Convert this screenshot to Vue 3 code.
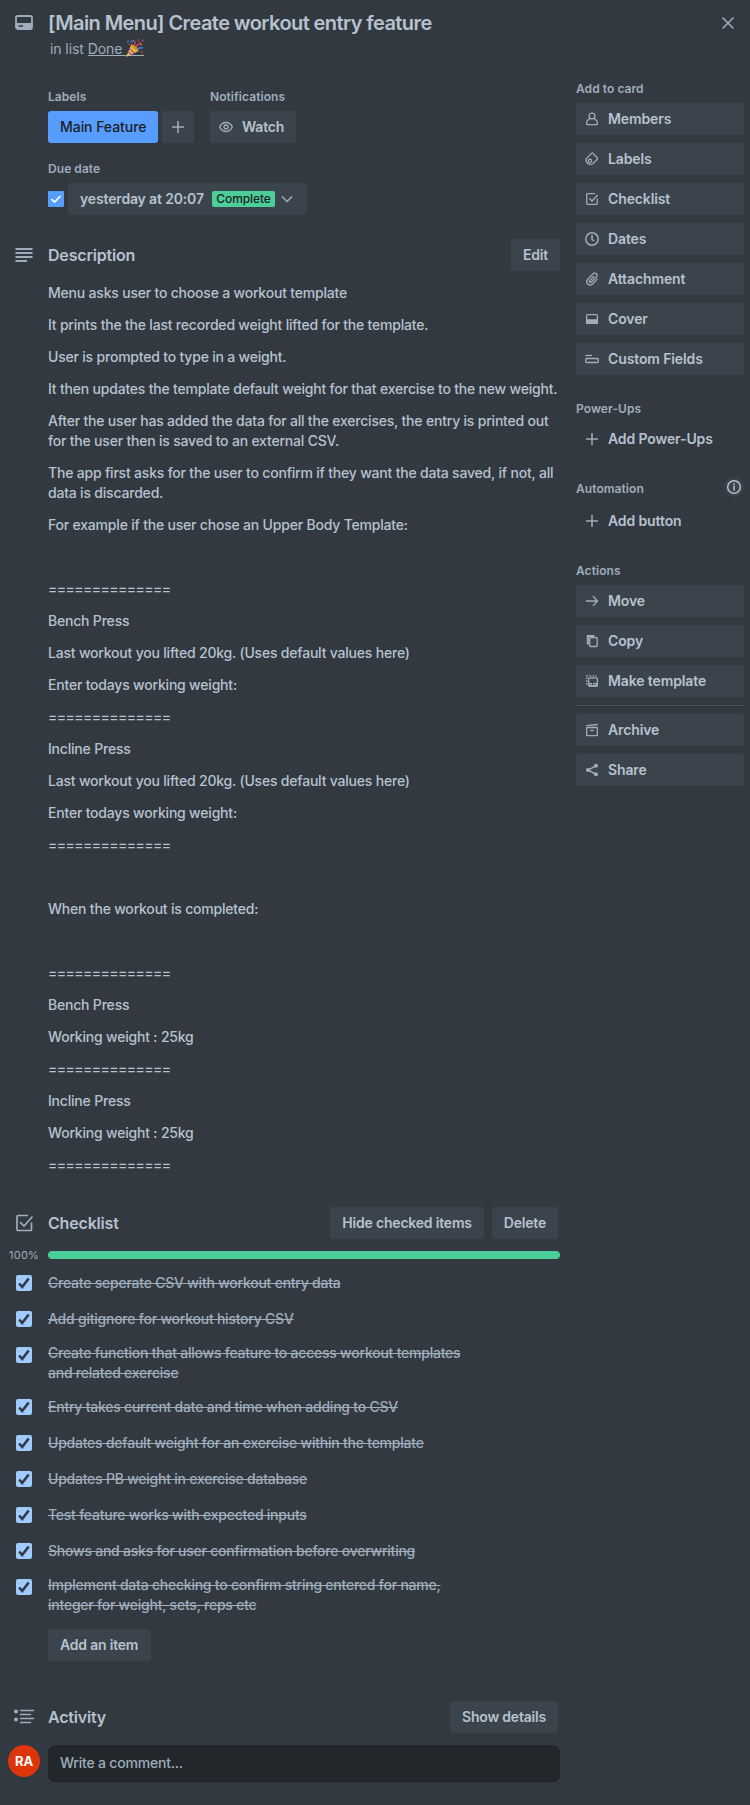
<script setup>
const rule = '=============='
const description = [
  'Menu asks user to choose a workout template',
  'It prints the the last recorded weight lifted for the template.',
  'User is prompted to type in a weight.',
  'It then updates the template default weight for that exercise to the new weight.',
  'After the user has added the data for all the exercises, the entry is printed out\nfor the user then is saved to an external CSV.',
  'The app first asks for the user to confirm if they want the data saved, if not, all\ndata is discarded.',
  'For example if the user chose an Upper Body Template:',
  '',
  rule,
  'Bench Press',
  'Last workout you lifted 20kg. (Uses default values here)',
  'Enter todays working weight:',
  rule,
  'Incline Press',
  'Last workout you lifted 20kg. (Uses default values here)',
  'Enter todays working weight:',
  rule,
  '',
  'When the workout is completed:',
  '',
  rule,
  'Bench Press',
  'Working weight : 25kg',
  rule,
  'Incline Press',
  'Working weight : 25kg',
  rule,
]
const items = [
  'Create seperate CSV with workout entry data',
  'Add gitignore for workout history CSV',
  'Create function that allows feature to access workout templates\nand related exercise',
  'Entry takes current date and time when adding to CSV',
  'Updates default weight for an exercise within the template',
  'Updates PB weight in exercise database',
  'Test feature works with expected inputs',
  'Shows and asks for user confirmation before overwriting',
  'Implement data checking to confirm string entered for name,\ninteger for weight, sets, reps etc',
]
const plus = '<path d="M8 2v12M2 8h12"/>'
const addToCard = [
  { label: 'Members', icon: '<circle cx="8" cy="5" r="2.900"/><path d="M5.900 7.600C3.600 8.600 2.600 10.300 2.600 12.700c0 .6.3.9.9.9h9c.6 0 .9-.3.9-.9 0-2.400-1-4.100-3.300-5.100"/>' },
  { label: 'Labels', icon: '<path d="M7.600 2.400Q8.300 1.700 9 2.400L13.400 7Q13.900 7.700 13.300 8.300L8.800 12.800A4.600 4.600 0 0 1 2.100 7.900Z" stroke-linejoin="round"/><circle cx="6" cy="9.700" r="1.600"/>' },
  { label: 'Checklist', icon: '<path d="M11 2.700H3.500a.8.8 0 0 0-.8.8v9a.8.8 0 0 0 .8.8h9a.8.8 0 0 0 .8-.8V7.500M5.300 7.300 8 10l5.700-6"/>' },
  { label: 'Dates', icon: '<circle cx="8" cy="8" r="6.200" stroke-width="1.500"/><path d="M8 4v4.300l2 1.700" stroke-width="1.500"/>' },
  { label: 'Attachment', icon: '<path d="m13.600 7.600-4.800 5.100c-1.500 1.500-3.700 1.700-5.100.4s-1.300-3.400.1-4.900l5.100-5.300c1-1 2.500-1.100 3.400-.2s.9 2.400-.1 3.400l-4.800 4.900c-.6.6-1.300.6-1.700.2s-.4-1.100.2-1.700L10.200 5"/>' },
  { label: 'Cover', icon: '<rect x="2.600" y="3.600" width="10.800" height="8.800" rx="1"/><path d="M2.600 9h10.800v3.400H2.600z" fill="currentColor"/>' },
  { label: 'Custom Fields', icon: '<path d="M1.500 4.500H8"/><rect x="1.700" y="7.500" width="12.600" height="4" rx="1"/>' },
]
const actions = [
  { label: 'Move', icon: '<path d="M2 8h11.500M9 3.300 13.500 8 9 12.700"/>' },
  { label: 'Copy', icon: '<path d="M3.800 11.500V3h6.700" stroke-width="2"/><rect x="5.700" y="4.700" width="7.500" height="8.800" rx=".8"/>' },
  { label: 'Make template', icon: '<path d="M2.700 12V2.800h10" stroke-dasharray="1.800 1.200"/><rect x="4.700" y="4.800" width="8.700" height="8.400" rx="1"/><path d="M5 10.800h3M9 10.800h4v2H5" stroke-width="1.500"/>' },
]
const moreActions = [
  { label: 'Archive', icon: '<path d="M2.300 3.600 13.800 2.500"/><rect x="2.700" y="5.500" width="10.600" height="8.200" rx=".6"/><path d="M6 8.500h4"/>' },
  { label: 'Share', icon: '<path d="M12 3.800 4 8l8 4.300" stroke-width="1.500"/><g fill="currentColor" stroke="none"><circle cx="12" cy="3.800" r="2"/><circle cx="4" cy="8" r="2"/><circle cx="12" cy="12.300" r="2"/></g>' },
]
</script>

<template>
  <div class="card">
    <header class="card-header">
      <svg class="header-icon" width="20" height="18" viewBox="0 0 20 18" fill="none" stroke="currentColor" stroke-width="1.800">
        <rect x="2" y="3" width="16" height="13" rx="1.800" />
        <path d="M2 10h16v5H2zM4.500 12.200v1.600H9v-1.600z" fill="currentColor" fill-rule="evenodd" stroke="none" />
      </svg>
      <div class="heading">
        <h1>[Main Menu] Create workout entry feature</h1>
        <p>in list <span class="list-link">Done <svg class="popper" width="18" height="18" viewBox="0 0 18 18" fill="none">
          <path d="M0 18 5.500 5.500 12.500 12Z" fill="#f8c13d" />
          <path d="m3.600 9.600 5 4.600M2.300 13l3.300 2.800" stroke="#9a5ca8" stroke-width="1.500" />
          <ellipse cx="9" cy="9" rx="1.700" ry="4.700" transform="rotate(-46 9 9)" fill="#d99520" />
          <path d="M8 7c2-1.500 0-3.500 1-5M10 8c1-3 4-2 4.500-5" stroke="#e5435a" stroke-width="1.300" />
          <path d="M11 10c2-2 4 0 6-1.500" stroke="#3b88dc" stroke-width="1.500" />
          <path d="M1 2.500h2M5 1l1.500 3" stroke="#347ac8" stroke-width="1.500" />
          <path d="M16 1.500h1.500M12 1.500l1-1M15 13h1.500M3 5l1 1" stroke="#e24660" stroke-width="1.500" />
          <path d="m14 6 2-1M7 1.500h1M16 16h1" stroke="#d08432" stroke-width="1.300" />
        </svg></span></p>
      </div>
      <svg class="close" width="16" height="16" viewBox="0 0 16 16" fill="none" stroke="currentColor" stroke-width="1.500"><path d="m2.500 2.500 11 11m0-11-11 11" /></svg>
    </header>

    <div class="columns">
      <main>
        <div class="meta">
          <section>
            <h3>Labels</h3>
            <div class="label-row">
              <span class="label-chip">Main Feature</span>
              <button class="btn square"><svg width="16" height="16" viewBox="0 0 16 16" fill="none" stroke="currentColor" stroke-width="1.500" v-html="plus"></svg></button>
            </div>
          </section>
          <section>
            <h3>Notifications</h3>
            <button class="btn watch">
              <svg width="16" height="16" viewBox="0 0 16 16" fill="none" stroke="currentColor" stroke-width="1.300"><path d="M1.700 8C3 5 5.100 3.500 8 3.500S13 5 14.300 8C13 11 10.900 12.500 8 12.500S3 11 1.700 8Z" /><circle cx="8" cy="8" r="2" /></svg>
              Watch
            </button>
          </section>
        </div>
        <section class="due">
          <h3>Due date</h3>
          <div class="due-row">
            <span class="due-check"><svg width="16" height="16" viewBox="0 0 16 16" fill="none" stroke="#fff" stroke-width="1.700"><path d="m3.500 8.200 3 2.800 6-6" /></svg></span>
            <button class="btn due-btn">
              yesterday at 20:07
              <span class="badge">Complete</span>
              <svg width="16" height="16" viewBox="0 0 16 16" fill="none" stroke="currentColor" stroke-width="1.500"><path d="m3 5.500 5 5 5-5" /></svg>
            </button>
          </div>
        </section>

        <section class="description">
          <div class="section-head">
            <svg class="section-icon" width="20" height="20" viewBox="0 0 20 20" fill="none" stroke="currentColor" stroke-width="1.800"><path d="M1.500 4h17M1.500 8h17M1.500 12h17M1.500 16H13" /></svg>
            <h2>Description</h2>
            <button class="btn">Edit</button>
          </div>
          <div class="prose">
            <p v-for="(line, i) in description" :key="i" :class="{ rule: line === rule }">{{ line }}</p>
          </div>
        </section>

        <section class="checklist">
          <div class="section-head inset">
            <svg class="section-icon" width="20" height="20" viewBox="0 0 20 20" fill="none" stroke="currentColor" stroke-width="1.700"><path d="M14 2.500H4a1 1 0 0 0-1 1v13a1 1 0 0 0 1 1h12.500a1 1 0 0 0 1-1V9.500M6 9l4 4 8.500-9.500" /></svg>
            <h2>Checklist</h2>
            <button class="btn">Hide checked items</button>
            <button class="btn">Delete</button>
          </div>
          <div class="progress"><span>100%</span><div class="track"></div></div>
          <ul>
            <li v-for="item in items" :key="item">
              <span class="tick"><svg width="16" height="16" viewBox="0 0 16 16" fill="none" stroke="#323940" stroke-width="2.600"><path d="m3.200 8.500 3 3.500 6.500-8.500" /></svg></span>
              <s>{{ item }}</s>
            </li>
          </ul>
          <button class="btn add-item">Add an item</button>
        </section>

        <section class="activity">
          <div class="section-head inset">
            <svg class="section-icon" width="22" height="20" viewBox="0 0 22 20" fill="none" stroke="currentColor" stroke-width="1.600" stroke-linecap="round"><path d="M7.500 3.500h13M7.500 7.500h10M7.500 11.500h13M7.500 15.500h10" /><g fill="currentColor" stroke="none"><circle cx="3" cy="4.500" r="2" /><circle cx="3" cy="12.500" r="2" /></g></svg>
            <h2>Activity</h2>
            <button class="btn">Show details</button>
          </div>
          <div class="comment-row">
            <span class="avatar">RA</span>
            <div class="comment">Write a comment...</div>
          </div>
        </section>
      </main>

      <aside>
        <h3>Add to card</h3>
        <button v-for="a in addToCard" :key="a.label" class="btn side">
          <svg width="16" height="16" viewBox="0 0 16 16" fill="none" stroke="currentColor" stroke-width="1.300" v-html="a.icon"></svg>{{ a.label }}
        </button>
        <h3 class="gap-top">Power-Ups</h3>
        <button class="btn side ghost">
          <svg width="16" height="16" viewBox="0 0 16 16" fill="none" stroke="currentColor" stroke-width="1.500" v-html="plus"></svg>Add Power-Ups
        </button>
        <div class="auto-head">
          <h3>Automation</h3>
          <span class="info"><svg width="16" height="16" viewBox="0 0 16 16" fill="none" stroke="currentColor" stroke-width="1.500"><circle cx="8" cy="8" r="6.300" /><path d="M8 4.300v1.500M8 6.500v5" /></svg></span>
        </div>
        <button class="btn side ghost">
          <svg width="16" height="16" viewBox="0 0 16 16" fill="none" stroke="currentColor" stroke-width="1.500" v-html="plus"></svg>Add button
        </button>
        <h3 class="gap-top">Actions</h3>
        <button v-for="a in actions" :key="a.label" class="btn side">
          <svg width="16" height="16" viewBox="0 0 16 16" fill="none" stroke="currentColor" stroke-width="1.300" v-html="a.icon"></svg>{{ a.label }}
        </button>
        <hr />
        <button v-for="a in moreActions" :key="a.label" class="btn side">
          <svg width="16" height="16" viewBox="0 0 16 16" fill="none" stroke="currentColor" stroke-width="1.300" v-html="a.icon"></svg>{{ a.label }}
        </button>
      </aside>
    </div>
  </div>
</template>

<style>
body { background: #323940; }
</style>

<style scoped>
.card {
  width: 750px;
  height: 1805px;
  box-sizing: border-box;
  overflow: hidden;
  background: #323940;
  color: #b6c2cf;
  font-family: Inter, "Liberation Sans", sans-serif;
  font-size: 14px;
  font-weight: 450;
  line-height: 20px;
  letter-spacing: -0.2px;
}
h1, h2, h3, p, ul { margin: 0; padding: 0; }
svg { display: block; flex: none; }
.card-header { display: flex; height: 77px; color: #9fadbc; }
.header-icon { margin: 13px 0 0 14px; }
.heading { margin-left: 14px; padding-top: 11px; flex: 1; }
h1 { font-size: 20px; line-height: 24px; font-weight: 600; color: #b6c2cf; letter-spacing: -0.58px; white-space: nowrap; }
.heading p { margin: 4px 0 0 2px; font-weight: 400; letter-spacing: -0.08px; }
.list-link { display: inline-flex; height: 16px; line-height: 20px; border-bottom: 1px solid currentColor; white-space: pre; vertical-align: top; }
.close { margin: 15px 14px 0 0; }

.columns { display: flex; gap: 16px; }
main { width: 512px; margin-left: 48px; flex: none; }
h3 { font-size: 12px; line-height: 20px; font-weight: 600; color: #9fadbc; letter-spacing: 0.06px; }
.meta { display: flex; gap: 16px; padding-top: 10px; }
.meta h3, .due h3 { margin-bottom: 4px; }
.label-row, .due-row { display: flex; gap: 4px; }
.btn {
  display: flex; align-items: center; box-sizing: border-box; height: 32px; padding: 0 12px;
  border: 0; border-radius: 3px; background: #3b444c; color: #b6c2cf;
  font: 600 14px/20px Inter, "Liberation Sans", sans-serif; letter-spacing: -0.2px; white-space: nowrap;
}
.btn svg { color: #9fadbc; }
.label-chip { width: 110px; box-sizing: border-box; height: 32px; line-height: 32px; padding-left: 12px; border-radius: 3px; background: #579dff; color: #1d2125; font-weight: 500; letter-spacing: -0.05px; }
.square { width: 32px; padding: 0 8px; }
.watch { width: 86px; padding: 0 8px; gap: 8px; }
.due { margin-top: 16px; }
.due-row { align-items: center; }
.due-check { width: 16px; height: 16px; background: #579dff; border-radius: 1px; }
.due-btn { width: 239px; letter-spacing: -0.15px; }
.badge { margin-left: auto; width: 63px; height: 16px; line-height: 16px; font-size: 12px; text-align: center; border-radius: 2px; background: #4bce97; color: #1d2125; font-weight: 500; letter-spacing: -0.1px; }
.due-btn svg { margin: 0 0 0 4px; }

.description { margin-top: 24px; }
.section-head { display: flex; align-items: center; height: 32px; gap: 8px; }
.section-head h2 { flex: 1; font-size: 16px; line-height: 20px; font-weight: 600; letter-spacing: -0.18px; }
.section-icon { margin-left: -34px; margin-right: 6px; color: #9fadbc; }
.inset { padding-right: 2px; }
.prose { margin-top: 12px; }
.prose p { min-height: 20px; margin-bottom: 12px; white-space: pre; }
.prose .rule { letter-spacing: -0.6px; }

.checklist { margin-top: 32px; }
.progress { display: flex; align-items: center; height: 8px; margin: 12px 0 6px -40px; }
.progress span { width: 40px; box-sizing: border-box; padding-left: 1px; font-size: 11px; font-weight: 400; letter-spacing: 0.25px; color: #9fadbc; }
.track { flex: 1; height: 8px; border-radius: 4px; background: #4bce97; }
ul { list-style: none; }
li { display: flex; align-items: center; padding: 6px 0; min-height: 24px; margin-left: -32px; color: #9fadbc; letter-spacing: -0.23px; }
.tick { align-self: flex-start; margin: 4px 16px 0 0; width: 16px; height: 16px; background: #9fcbff; border-radius: 2px; }
s { white-space: pre; }
.add-item { margin-top: 8px; width: 103px; }
.activity { margin-top: 40px; }
.activity .section-icon { margin-left: -35px; margin-right: 5px; }
.comment-row { display: flex; gap: 8px; margin: 12px 0 0 -40px; }
.avatar { width: 32px; height: 32px; border-radius: 50%; background: #de350b; color: #fff; font-size: 13px; font-weight: 700; line-height: 32px; text-align: center; }
.comment { flex: 1; height: 37px; box-sizing: border-box; padding: 8px 12px; border-radius: 8px; background: #22272b; color: #9fadbc; box-shadow: inset 0 -1px 0 #1c2125; }

aside { width: 168px; padding-top: 2px; }
aside h3 { margin-bottom: 4px; }
.side { width: 168px; padding: 0 8px; gap: 8px; margin-bottom: 8px; letter-spacing: -0.12px; }
.ghost { background: transparent; }
aside .gap-top { margin-top: 24px; }
.auto-head { display: flex; justify-content: space-between; margin-top: 22px; height: 28px; }
.auto-head h3 { margin-top: 2px; }
.info { width: 20px; height: 20px; box-sizing: border-box; padding: 2px; border-radius: 50%; background: #3b444c; }
hr { height: 1px; border: 0; margin: 0 0 8px; background: #4a545e; }
</style>
